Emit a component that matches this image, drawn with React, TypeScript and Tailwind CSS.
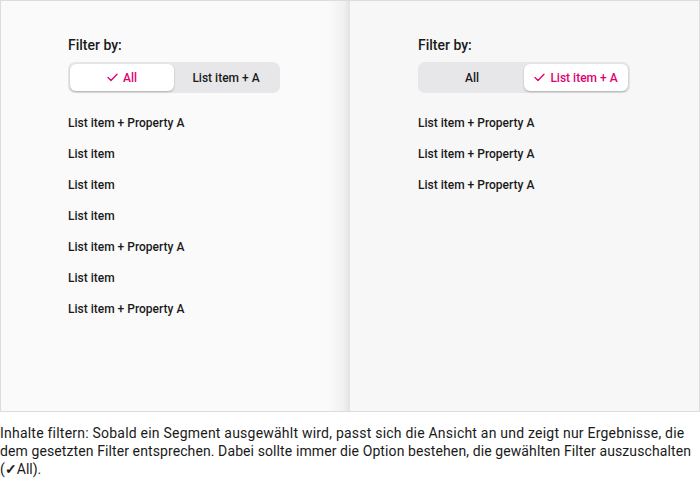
import React from "react";

const Check = () => (
  <svg width="11" height="9" viewBox="0 0 11 9" fill="none" className="mr-[5px]">
    <path d="M1 4.5L4 7.5L10 1.2" stroke="#e20074" strokeWidth="1.3" strokeLinecap="round" strokeLinejoin="round" />
  </svg>
);

function Segmented({ active }: { active: 0 | 1 }) {
  const labels = ["All", "List item + A"];
  return (
    <div className="flex w-[212px] h-[31px] rounded-[7px] bg-[#e7e7e9] p-[2px]">
      {labels.map((l, i) =>
        i === active ? (
          <div
            key={l}
            className="flex-1 flex items-center justify-center rounded-[6px] bg-white text-[#e20074] shadow-[0_1px_2px_rgba(0,0,0,0.25)] text-[12px] font-medium"
          >
            <Check />
            {l}
          </div>
        ) : (
          <div key={l} className="flex-1 flex items-center justify-center text-[#1a1a1a] text-[12px] font-medium">
            {l}
          </div>
        )
      )}
    </div>
  );
}

function Panel({ active, items }: { active: 0 | 1; items: string[] }) {
  return (
    <div className="flex flex-col pl-[67px] pt-[35px]">
      <div className="text-[14px] font-medium text-[#1a1a1a] leading-[18px]">Filter by:</div>
      <div className="mt-[8px]">
        <Segmented active={active} />
      </div>
      <div className="flex flex-col mt-[14px]">
        {items.map((t, i) => (
          <div key={i} className="h-[31px] flex items-center text-[12px] font-medium text-[#1a1a1a]">
            {t}
          </div>
        ))}
      </div>
    </div>
  );
}

export default function App() {
  return (
    <div className="w-[700px] h-[482px] bg-white" style={{ fontFamily: "Roboto, 'Noto Sans', sans-serif" }}>
      <div className="flex w-[700px] h-[412px] border border-[#dcdcdc]">
        <div className="w-[349px] h-full bg-[linear-gradient(to_left,#e2e2e2_0px,#f0f0f0_6px,#fafafa_22px,#fafafa_100%)]">
          <Panel
            active={0}
            items={[
              "List item + Property A",
              "List item",
              "List item",
              "List item",
              "List item + Property A",
              "List item",
              "List item + Property A",
            ]}
          />
        </div>
        <div className="flex-1 h-full bg-[#f7f7f7] pl-[1px]">
          <Panel active={1} items={["List item + Property A", "List item + Property A", "List item + Property A"]} />
        </div>
      </div>
      <p className="mt-[12px] text-[14px] leading-[18px] text-[#1a1a1a] whitespace-nowrap">
        <span className="tracking-[0.22px]">
          Inhalte filtern: Sobald ein Segment ausgewählt wird, passt sich die Ansicht an und zeigt nur Ergebnisse, die
        </span>
        <br />
        <span className="tracking-[0.1px]">
          dem gesetzten Filter entsprechen. Dabei sollte immer die Option bestehen, die gewählten Filter auszuschalten
        </span>
        <br />
        (<span className="font-bold">✓</span>All).
      </p>
    </div>
  );
}
